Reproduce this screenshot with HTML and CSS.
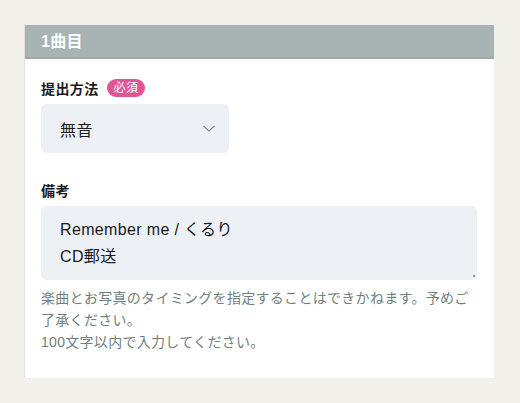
FILE: index.html
```html
<!DOCTYPE html>
<html lang="ja">
<head>
<meta charset="utf-8">
<link rel="stylesheet" href="styles.css">
</head>
<body>
<section class="card">
  <h2 class="card-header">1曲目</h2>
  <div class="card-body">
    <div class="field">
      <div class="label">提出方法<span class="badge">必須</span></div>
      <div class="select-box">
        <span class="select-value">無音</span>
        <svg class="chevron" width="12" height="7" viewBox="0 0 12 7"><path d="M0.5 0.8 L6 6 L11.5 0.8" fill="none" stroke="#7f8b8b" stroke-width="1.1"/></svg>
      </div>
    </div>
    <div class="field field-notes">
      <div class="label">備考</div>
      <div class="textarea">Remember me / くるり<br>CD郵送<span class="grip"></span></div>
      <p class="help">楽曲とお写真のタイミングを指定することはできかねます。予めご了承ください。<br>100文字以内で入力してください。</p>
    </div>
  </div>
</section>
</body>
</html>
```

FILE: styles.css
```css
html, body {
  margin: 0;
  padding: 0;
}
body {
  background: #f2f0eb;
  font-family: "Liberation Sans", "Noto Sans CJK JP", sans-serif;
  color: #1a1a1a;
  padding: 25px 26px 24px 24px;
}
.card {
  background: #ffffff;
  width: 470px;
  box-sizing: border-box;
  border-left: 1px solid #e4e2dd;
}
.card-header {
  margin: 0;
  height: 32px;
  line-height: 33px;
  padding: 0 16px;
  background: #a8b4b3;
  border-bottom: 2px solid #9caaa9;
  color: #ffffff;
  font-size: 16px;
  font-weight: bold;
  letter-spacing: 0.3px;
}
.card-body {
  padding: 18px 17px 25px 16px;
  display: flex;
  flex-direction: column;
  gap: 26px;
}
.field {
  display: flex;
  flex-direction: column;
}
.label {
  display: flex;
  align-items: center;
  height: 21px;
  font-size: 14px;
  font-weight: bold;
  letter-spacing: 0.4px;
  margin-bottom: 6px;
}
.badge {
  display: inline-block;
  margin-left: 8px;
  height: 18px;
  line-height: 18px;
  padding: 0 7px;
  border-radius: 9px;
  background: #df5595;
  color: #ffffff;
  font-size: 12px;
  font-weight: normal;
  letter-spacing: 0.3px;
}
.select-box {
  width: 188px;
  height: 49px;
  box-sizing: border-box;
  background: #edf1f5;
  border-radius: 5px;
  display: flex;
  align-items: center;
  justify-content: space-between;
  padding: 0 14px 0 19px;
}
.select-value {
  font-size: 16px;
  letter-spacing: 0.4px;
}
.chevron {
  display: block;
}
.textarea {
  position: relative;
  background: #edf1f5;
  border-radius: 5px;
  padding: 10px 19px;
  font-size: 16px;
  line-height: 27px;
  letter-spacing: 0.35px;
}
.grip {
  position: absolute;
  right: 2px;
  bottom: 3px;
  width: 2px;
  height: 2px;
  background: #8a9090;
}
.help {
  margin: 7px 0 0;
  font-size: 14px;
  line-height: 22px;
  letter-spacing: 0.3px;
  color: #6f7f80;
}
```
